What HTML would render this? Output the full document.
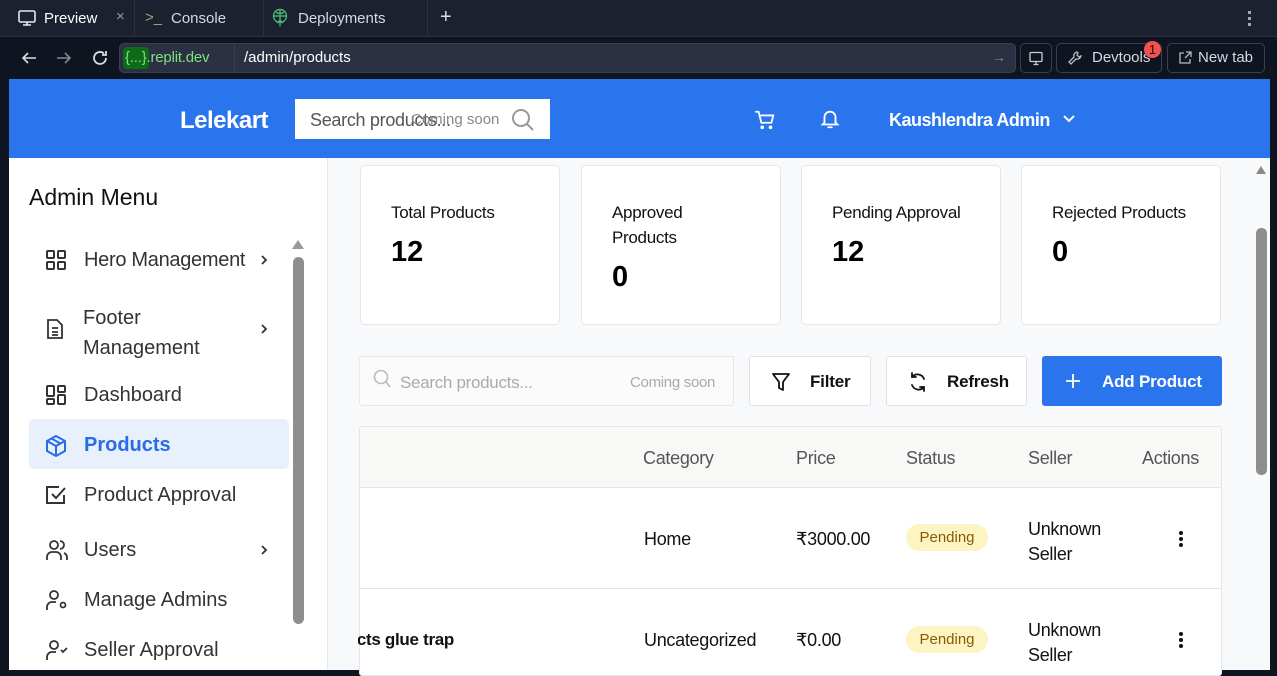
<!DOCTYPE html>
<html><head><meta charset="utf-8"><style>
*{box-sizing:border-box;margin:0;padding:0}
body{width:1277px;height:670px;overflow:hidden;background:#0f1421;font-family:"Liberation Sans",sans-serif;position:relative}
.a{position:absolute}
.t{color:#d6d9e0;font-size:15px}
.card{position:absolute;top:165px;width:200px;height:160px;background:#fff;border:1px solid #e4e6ea;border-radius:5px}
.card .l{position:absolute;left:30px;top:34px;font-size:17px;color:#111;line-height:25px;letter-spacing:-0.3px}
.card .n{position:absolute;left:30px;font-size:29px;font-weight:bold;color:#000}
.mi{position:absolute;left:29px;width:260px;font-size:20px;color:#333}
.mi svg{position:absolute;left:16px}
.btn{position:absolute;top:356px;height:50px;background:#fff;border:1px solid #dfe1e5;border-radius:3px;font-size:17px;font-weight:bold;color:#111;letter-spacing:-0.2px}
.th{position:absolute;top:448px;font-size:18px;color:#555;letter-spacing:-0.3px}
.td{position:absolute;font-size:18px;color:#111;letter-spacing:-0.3px}
.pill{position:absolute;left:906px;width:82px;height:27px;background:#fdf4c3;border-radius:14px;color:#8a5a00;font-size:15px;text-align:center;line-height:27px}
.dots{position:absolute;left:1179px;width:4px}
.dots i{display:block;width:4px;height:4px;background:#111;border-radius:2px;margin-bottom:2px}
</style></head><body>
<!-- tabs -->
<div class="a" style="left:0;top:0;width:1277px;height:37px;background:#1c2130;border-bottom:1px solid #2b3142"></div>
<svg class="a" style="left:17px;top:9px" width="20" height="18" viewBox="0 0 20 18" fill="none" stroke="#e6e8ee" stroke-width="1.6"><rect x="2" y="2" width="16" height="11" rx="1.5"/><path d="M10 13v3M6 16h8"/></svg>
<div class="a t" style="left:44px;top:10px;color:#fff">Preview</div>
<div class="a" style="left:116px;top:8px;color:#999;font-size:15px">×</div>
<div class="a" style="left:134px;top:0;width:1px;height:37px;background:#2b3142"></div>
<div class="a" style="left:145px;top:9px;color:#b0a070;font-size:15px">&gt;_</div>
<div class="a t" style="left:171px;top:10px">Console</div>
<div class="a" style="left:263px;top:0;width:1px;height:37px;background:#2b3142"></div>
<svg class="a" style="left:271px;top:8px" width="18" height="20" viewBox="0 0 18 20" fill="none" stroke="#4caf70" stroke-width="1.4"><circle cx="9" cy="8" r="6.5"/><path d="M2.5 8h13M9 1.5v17M5 4c2 2 6 2 8 0M6 15l3-3 3 3"/></svg>
<div class="a t" style="left:298px;top:10px">Deployments</div>
<div class="a" style="left:427px;top:0;width:1px;height:37px;background:#2b3142"></div>
<div class="a" style="left:440px;top:6px;color:#ddd;font-size:20px">+</div>
<div class="a" style="left:1248px;top:11px;width:3px"><i style="display:block;width:3px;height:3px;background:#aaa;margin-bottom:3px"></i><i style="display:block;width:3px;height:3px;background:#aaa;margin-bottom:3px"></i><i style="display:block;width:3px;height:3px;background:#aaa"></i></div>
<!-- address -->
<svg class="a" style="left:20px;top:50px" width="18" height="16" viewBox="0 0 18 16" fill="none" stroke="#ddd" stroke-width="1.6"><path d="M16 8H3M8 3L3 8l5 5"/></svg>
<svg class="a" style="left:55px;top:50px" width="18" height="16" viewBox="0 0 18 16" fill="none" stroke="#888" stroke-width="1.6"><path d="M2 8h13M10 3l5 5-5 5"/></svg>
<svg class="a" style="left:90px;top:48px" width="20" height="20" viewBox="0 0 20 20" fill="none" stroke="#ddd" stroke-width="1.8"><path d="M16 10a6 6 0 11-2-4.5M16 3v4h-4"/></svg>
<div class="a" style="left:119px;top:43px;width:897px;height:30px;background:#2b3142;border:1px solid #3a4052;border-radius:5px"></div>
<div class="a" style="left:123px;top:47px;width:26px;height:22px;background:#0e6b18;border-radius:4px"></div>
<div class="a" style="left:125px;top:49px;color:#7ee07e;font-size:15px;letter-spacing:-0.2px">{...}.replit.dev</div>
<div class="a" style="left:234px;top:44px;width:1px;height:28px;background:#3a4052"></div>
<div class="a" style="left:244px;top:49px;color:#fff;font-size:15px">/admin/products</div>
<div class="a" style="left:992px;top:49px;color:#888;font-size:14px">→</div>
<div class="a" style="left:1020px;top:43px;width:32px;height:30px;border:1px solid #3a4052;border-radius:5px"></div>
<svg class="a" style="left:1028px;top:51px" width="16" height="15" viewBox="0 0 16 15" fill="none" stroke="#ccc" stroke-width="1.3"><rect x="2" y="1.5" width="12" height="9" rx="1"/><path d="M8 10.5v3M5.5 13.5h5"/></svg>
<div class="a" style="left:1056px;top:43px;width:106px;height:30px;border:1px solid #3a4052;border-radius:5px"></div>
<svg class="a" style="left:1067px;top:50px" width="16" height="16" viewBox="0 0 16 16" fill="none" stroke="#bbb" stroke-width="1.3"><path d="M10 2a4 4 0 00-3 5L2 12l2 2 5-5a4 4 0 005-3l-2 1-2-2 1-2z"/></svg>
<div class="a t" style="left:1092px;top:49px">Devtools</div>
<div class="a" style="left:1144px;top:41px;width:17px;height:17px;background:#ef5350;border-radius:50%;color:#300;font-size:13px;text-align:center;line-height:17px">1</div>
<div class="a" style="left:1167px;top:43px;width:98px;height:30px;border:1px solid #3a4052;border-radius:5px"></div>
<svg class="a" style="left:1178px;top:50px" width="15" height="15" viewBox="0 0 15 15" fill="none" stroke="#bbb" stroke-width="1.3"><path d="M6 3H2v10h10V9M8 2h5v5M13 2L7 8"/></svg>
<div class="a t" style="left:1198px;top:49px">New tab</div>
<!-- page -->
<div class="a" style="left:9px;top:79px;width:1261px;height:591px;background:#f8f9fb"></div>
<div class="a" style="left:9px;top:79px;width:1261px;height:79px;background:#2a74ee"></div>
<div class="a" style="left:180px;top:107px;color:#fff;font-size:24px;font-weight:bold;letter-spacing:-0.5px">Lelekart</div>
<div class="a" style="left:295px;top:99px;width:255px;height:40px;background:#fff"></div>
<div class="a" style="left:310px;top:110px;color:#555;font-size:18px;letter-spacing:-0.3px">Search products...</div>
<div class="a" style="left:411px;top:111px;color:#888;font-size:15px">Coming soon</div>
<svg class="a" style="left:511px;top:108px" width="24" height="24" viewBox="0 0 24 24" fill="none" stroke="#999" stroke-width="2"><circle cx="10" cy="10" r="8"/><path d="M16 16l6 6"/></svg>
<svg class="a" style="left:754px;top:109px" width="22" height="22" viewBox="0 0 24 24" fill="none" stroke="#fff" stroke-width="2" stroke-linecap="round"><path d="M2 3h3l3 12h11l2-8H7"/><circle cx="9" cy="20" r="1"/><circle cx="18" cy="20" r="1"/></svg>
<svg class="a" style="left:819px;top:108px" width="22" height="22" viewBox="0 0 24 24" fill="none" stroke="#fff" stroke-width="2" stroke-linecap="round"><path d="M6 16V10a6 6 0 0112 0v6l2 2H4zM10 21h4"/></svg>
<div class="a" style="left:889px;top:110px;color:#fff;font-size:18px;font-weight:bold;letter-spacing:-0.5px">Kaushlendra Admin</div>
<svg class="a" style="left:1062px;top:114px" width="14" height="10" viewBox="0 0 14 10" fill="none" stroke="#fff" stroke-width="2"><path d="M2 2l5 5 5-5"/></svg>
<!-- sidebar -->
<div class="a" style="left:9px;top:158px;width:319px;height:512px;background:#fff;border-right:1px solid #e7e8eb"></div>
<div class="a" style="left:29px;top:184px;font-size:23px;color:#111">Admin Menu</div>
<div class="a" style="left:292px;top:240px;width:0;height:0;border:6px solid transparent;border-bottom:9px solid #999;border-top:0"></div>
<div class="a" style="left:293px;top:257px;width:11px;height:367px;background:#8e8e8e;border-radius:6px"></div>
<div class="mi" style="top:249px"><svg width="22" height="22" viewBox="0 0 22 22" fill="none" stroke="#333" stroke-width="2"><rect x="2" y="2" width="7" height="7" rx="1"/><rect x="13" y="2" width="7" height="7" rx="1"/><rect x="2" y="13" width="7" height="7" rx="1"/><rect x="13" y="13" width="7" height="7" rx="1"/></svg><span style="position:absolute;left:55px;top:0;letter-spacing:-0.3px">Hero Management</span><svg style="left:230px;top:5px" width="10" height="12" viewBox="0 0 10 12" fill="none" stroke="#333" stroke-width="1.8"><path d="M3 2l4 4-4 4"/></svg></div>
<div class="mi" style="top:303px"><svg style="top:15px" width="20" height="22" viewBox="0 0 20 22" fill="none" stroke="#333" stroke-width="1.8"><path d="M3 2h9l5 5v13H3zM7 10h6M7 14h6M7 17h6"/></svg><span style="position:absolute;left:54px;top:0;line-height:30px">Footer<br>Management</span><svg style="left:230px;top:20px" width="10" height="12" viewBox="0 0 10 12" fill="none" stroke="#333" stroke-width="1.8"><path d="M3 2l4 4-4 4"/></svg></div>
<div class="mi" style="top:384px"><svg width="22" height="22" viewBox="0 0 22 22" fill="none" stroke="#333" stroke-width="2"><rect x="2" y="2" width="7" height="10" rx="1"/><rect x="13" y="2" width="7" height="6" rx="1"/><rect x="2" y="15" width="7" height="5" rx="1"/><rect x="13" y="11" width="7" height="9" rx="1"/></svg><span style="position:absolute;left:55px;top:0">Dashboard</span></div>
<div class="a" style="left:29px;top:419px;width:260px;height:50px;background:#e8f0fc;border-radius:5px"></div>
<div class="mi" style="top:434px;color:#2a6be6;font-weight:bold"><svg width="22" height="24" viewBox="0 0 22 24" fill="none" stroke="#2a6be6" stroke-width="2" stroke-linejoin="round"><path d="M11 2l9 5v10l-9 5-9-5V7zM2 7l9 5 9-5M11 12v10M6.5 4.5l9 5"/></svg><span style="position:absolute;left:55px;top:0">Products</span></div>
<div class="mi" style="top:484px"><svg width="22" height="22" viewBox="0 0 22 22" fill="none" stroke="#333" stroke-width="2"><path d="M19 11v8H2V3h12M7 10l4 4 9-10"/></svg><span style="position:absolute;left:55px;top:0">Product Approval</span></div>
<div class="mi" style="top:539px"><svg width="24" height="22" viewBox="0 0 24 22" fill="none" stroke="#333" stroke-width="1.8"><circle cx="9" cy="6" r="4"/><path d="M2 21v-3a5 5 0 015-5h4a5 5 0 015 5v3M15 2a4 4 0 010 8M19 14a5 5 0 013 4v3"/></svg><span style="position:absolute;left:55px;top:0">Users</span><svg style="left:230px;top:5px" width="10" height="12" viewBox="0 0 10 12" fill="none" stroke="#333" stroke-width="1.8"><path d="M3 2l4 4-4 4"/></svg></div>
<div class="mi" style="top:589px"><svg width="24" height="22" viewBox="0 0 24 22" fill="none" stroke="#333" stroke-width="1.8"><circle cx="9" cy="6" r="4"/><path d="M2 21v-3a5 5 0 015-5h4"/><circle cx="18" cy="16" r="2.5"/></svg><span style="position:absolute;left:55px;top:0">Manage Admins</span></div>
<div class="mi" style="top:639px"><svg width="24" height="22" viewBox="0 0 24 22" fill="none" stroke="#333" stroke-width="1.8"><circle cx="9" cy="6" r="4"/><path d="M2 21v-3a5 5 0 015-5h4M16 11l2 2 4-4"/></svg><span style="position:absolute;left:55px;top:0">Seller Approval</span></div>
<!-- cards -->
<div class="card" style="left:360px"><div class="l">Total Products</div><div class="n" style="top:70px">12</div></div>
<div class="card" style="left:581px"><div class="l">Approved<br>Products</div><div class="n" style="top:95px">0</div></div>
<div class="card" style="left:801px"><div class="l">Pending Approval</div><div class="n" style="top:70px">12</div></div>
<div class="card" style="left:1021px"><div class="l">Rejected Products</div><div class="n" style="top:70px">0</div></div>
<!-- toolbar -->
<div class="a" style="left:359px;top:356px;width:375px;height:50px;background:#fbfbfc;border:1px solid #e7e8eb;border-radius:3px"></div>
<svg class="a" style="left:373px;top:369px" width="18" height="20" viewBox="0 0 18 20" fill="none" stroke="#bbb" stroke-width="1.6"><circle cx="8" cy="8" r="6.5"/><path d="M13 13l4 5"/></svg>
<div class="a" style="left:400px;top:373px;color:#aaa;font-size:17px;letter-spacing:-0.3px">Search products...</div>
<div class="a" style="left:630px;top:374px;color:#aaa;font-size:15px;letter-spacing:-0.3px">Coming soon</div>
<div class="btn" style="left:749px;width:122px"><svg style="position:absolute;left:22px;top:15px" width="18" height="20" viewBox="0 0 18 20" fill="none" stroke="#111" stroke-width="1.8" stroke-linejoin="round"><path d="M1 2h16l-6 8v8l-4-2v-6z"/></svg><span style="position:absolute;left:60px;top:15px">Filter</span></div>
<div class="btn" style="left:886px;width:141px"><svg style="position:absolute;left:21px;top:15px" width="20" height="20" viewBox="0 0 20 20" fill="none" stroke="#111" stroke-width="1.8" stroke-linecap="round"><path d="M16 7a7 7 0 00-12-2M4 13a7 7 0 0012 2M4 1v4h4M16 19v-4h-4"/></svg><span style="position:absolute;left:60px;top:15px">Refresh</span></div>
<div class="btn" style="left:1042px;width:180px;background:#2a74ee;border-color:#2a74ee;color:#fff"><svg style="position:absolute;left:22px;top:16px" width="16" height="16" viewBox="0 0 16 16" fill="none" stroke="#fff" stroke-width="1.8"><path d="M8 1v14M1 8h14"/></svg><span style="position:absolute;left:59px;top:15px">Add Product</span></div>
<!-- table -->
<div class="a" style="left:359px;top:426px;width:863px;height:250px;background:#fff;border:1px solid #e4e6ea;border-radius:3px"></div>
<div class="a" style="left:360px;top:427px;width:861px;height:61px;background:#f8f8f7;border-bottom:1px solid #e4e6ea"></div>
<div class="th" style="left:643px">Category</div>
<div class="th" style="left:796px">Price</div>
<div class="th" style="left:906px">Status</div>
<div class="th" style="left:1028px">Seller</div>
<div class="th" style="left:1142px">Actions</div>
<div class="a" style="left:360px;top:588px;width:861px;height:1px;background:#e4e6ea"></div>
<div class="td" style="left:644px;top:529px">Home</div>
<div class="td" style="left:796px;top:529px">₹3000.00</div>
<div class="pill" style="top:524px">Pending</div>
<div class="td" style="left:1028px;top:517px;line-height:25px">Unknown<br>Seller</div>
<div class="dots" style="top:531px"><i></i><i></i><i></i></div>
<div class="td" style="left:358px;top:630px;font-weight:bold;width:96px;overflow:hidden;white-space:nowrap;direction:rtl;font-size:17px">insects glue trap</div>
<div class="td" style="left:644px;top:630px">Uncategorized</div>
<div class="td" style="left:796px;top:630px">₹0.00</div>
<div class="pill" style="top:626px">Pending</div>
<div class="td" style="left:1028px;top:618px;line-height:25px">Unknown<br>Seller</div>
<div class="dots" style="top:632px"><i></i><i></i><i></i></div>
<!-- main scrollbar -->
<div class="a" style="left:1253px;top:158px;width:17px;height:512px;background:#f8f9fb"></div>
<div class="a" style="left:1256px;top:166px;width:0;height:0;border:5px solid transparent;border-bottom:8px solid #888;border-top:0"></div>
<div class="a" style="left:1256px;top:228px;width:11px;height:247px;background:#8e8e8e;border-radius:5px"></div>
</body></html>
